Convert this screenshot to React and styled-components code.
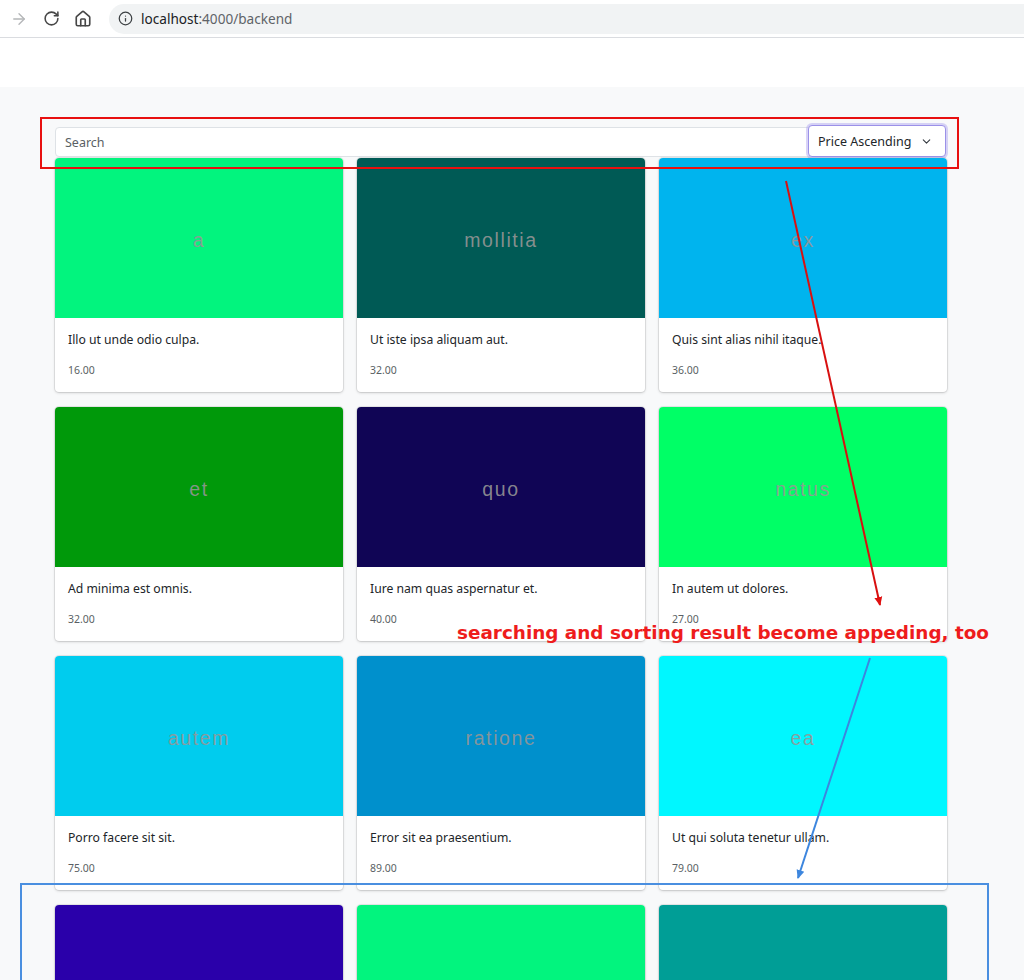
import React from "react";
import styled, { createGlobalStyle } from "styled-components";
import { ArrowRight, RotateCw, House, Info, ChevronDown } from "lucide-react";

const GlobalStyle = createGlobalStyle`
  body {
    margin: 0;
    font-family: "Noto Sans", "Open Sans", sans-serif;
    background: #fff;
    color: #212529;
  }
`;

const Page = styled.div`
  position: relative;
  width: 1024px;
  height: 980px;
  overflow: hidden;
`;

const BrowserBar = styled.header`
  height: 37px;
  display: flex;
  align-items: center;
  border-bottom: 1px solid #dadce0;
  background: #fff;
`;

const NavButton = styled.span`
  width: 32px;
  display: flex;
  justify-content: center;
  color: ${p => (p.$disabled ? "#b4b6b8" : "#474747")};
  margin-left: ${p => (p.$first ? "3px" : "0")};
`;

const UrlField = styled.div`
  flex: 1;
  height: 30px;
  margin-left: 10px;
  border-radius: 15px 0 0 15px;
  background: #f1f3f4;
  display: flex;
  align-items: center;
  padding-left: 9px;
  gap: 8px;
  font-size: 13.6px;
  color: #202124;

  span.rest {
    color: #5f6368;
  }
`;

const Spacer = styled.div`
  height: 49px;
  background: #fff;
`;

const Main = styled.main`
  background: #f8f9fa;
  padding: 40px 0 40px 55px;
  min-height: 900px;
`;

const Container = styled.div`
  width: 891px;
`;

const Toolbar = styled.div`
  height: 30px;
  display: flex;
  align-items: center;
  background: #fff;
  border: 1px solid #dee2e6;
  border-radius: 4px;
  box-sizing: border-box;
`;

const SearchText = styled.div`
  flex: 1;
  padding-left: 9px;
  font-size: 12.5px;
  color: #5a5f64;
`;

const SortSelect = styled.div`
  width: 138px;
  height: 32px;
  box-sizing: border-box;
  align-self: flex-start;
  margin: -3px -1px 0 0;
  display: flex;
  align-items: center;
  justify-content: space-between;
  padding: 0 12px 0 9px;
  background: #fff;
  border: 1px solid #9b91e8;
  border-radius: 4px;
  box-shadow: 0 0 0 2px rgba(170, 160, 240, 0.45);
  font-size: 12.5px;
  color: #212529;
`;

const Grid = styled.div`
  display: grid;
  grid-template-columns: repeat(3, 288px);
  column-gap: 14px;
  row-gap: 15px;
  margin-top: 1px;
`;

const Card = styled.article`
  height: 234px;
  background: #fff;
  border-radius: 4px;
  box-shadow: 0 0 0 1px rgba(0, 0, 0, 0.07), 0 1px 3px rgba(0, 0, 0, 0.16);
  overflow: hidden;
`;

const Thumb = styled.div`
  height: 160px;
  box-sizing: border-box;
  padding-top: 4px;
  background: ${p => p.$bg};
  display: flex;
  align-items: center;
  justify-content: center;
  font-family: "Liberation Sans", Arial, sans-serif;
  font-size: 19.5px;
  letter-spacing: 1.6px;
  color: rgba(150, 150, 150, 0.9);
`;

const CardBody = styled.div`
  padding: 13px 13px 0;
`;

const Title = styled.div`
  font-size: 12.2px;
  line-height: 18px;
  color: #212529;
`;

const Price = styled.div`
  margin-top: 14px;
  font-size: 10.5px;
  color: #5a5f64;
`;

const Overlay = styled.svg`
  position: absolute;
  left: 0;
  top: 0;
  pointer-events: none;
`;

const Note = styled.div`
  position: absolute;
  left: 457px;
  top: 622px;
  font-family: "DejaVu Sans", sans-serif;
  font-weight: bold;
  font-size: 18.4px;
  color: #ee1c1c;
  white-space: nowrap;
`;

const PRODUCTS = [
  { id: 1, word: "a", bg: "#02f47e", name: "Illo ut unde odio culpa.", price: "16.00" },
  { id: 2, word: "mollitia", bg: "#005a55", name: "Ut iste ipsa aliquam aut.", price: "32.00" },
  { id: 3, word: "ex", bg: "#00b4ee", name: "Quis sint alias nihil itaque.", price: "36.00" },
  { id: 4, word: "et", bg: "#00990a", name: "Ad minima est omnis.", price: "32.00" },
  { id: 5, word: "quo", bg: "#100555", name: "Iure nam quas aspernatur et.", price: "40.00" },
  { id: 6, word: "natus", bg: "#00ff66", name: "In autem ut dolores.", price: "27.00" },
  { id: 7, word: "autem", bg: "#00ccee", name: "Porro facere sit sit.", price: "75.00" },
  { id: 8, word: "ratione", bg: "#0090cc", name: "Error sit ea praesentium.", price: "89.00" },
  { id: 9, word: "ea", bg: "#00f7ff", name: "Ut qui soluta tenetur ullam.", price: "79.00" },
  { id: 10, word: "", bg: "#2a00aa", name: "", price: "" },
  { id: 11, word: "", bg: "#02f47e", name: "", price: "" },
  { id: 12, word: "", bg: "#009e96", name: "", price: "" },
];

const App = () => {
  return (
    <Page>
      <GlobalStyle />
      <BrowserBar>
        <NavButton $disabled $first><ArrowRight size={18} strokeWidth={1.8} /></NavButton>
        <NavButton><RotateCw size={17} strokeWidth={2.2} /></NavButton>
        <NavButton><House size={18} strokeWidth={2.2} /></NavButton>
        <UrlField>
          <Info size={15} strokeWidth={2} color="#3c4043" />
          <span>localhost<span className="rest">:4000/backend</span></span>
        </UrlField>
      </BrowserBar>
      <Spacer />
      <Main>
        <Container>
          <Toolbar>
            <SearchText>Search</SearchText>
            <SortSelect>
              Price Ascending
              <ChevronDown size={13} strokeWidth={2} color="#343a40" />
            </SortSelect>
          </Toolbar>
          <Grid>
            {PRODUCTS.map(p => (
              <Card key={p.id}>
                <Thumb $bg={p.bg}>{p.word}</Thumb>
                <CardBody>
                  <Title>{p.name}</Title>
                  <Price>{p.price}</Price>
                </CardBody>
              </Card>
            ))}
          </Grid>
        </Container>
      </Main>

      <Overlay width="1024" height="980" viewBox="0 0 1024 980">
        <defs>
          <marker id="redHead" markerWidth="10" markerHeight="10" refX="8" refY="5" orient="auto" markerUnits="userSpaceOnUse">
            <path d="M0,1 L9,5 L0,9 Z" fill="#e01010" />
          </marker>
          <marker id="blueHead" markerWidth="10" markerHeight="10" refX="8" refY="5" orient="auto" markerUnits="userSpaceOnUse">
            <path d="M0,1 L9,5 L0,9 Z" fill="#3d86de" />
          </marker>
        </defs>
        <rect x="41" y="118" width="917" height="50" fill="none" stroke="#e81010" strokeWidth="2" />
        <line x1="786" y1="181" x2="880" y2="605" stroke="#d81010" strokeWidth="2" markerEnd="url(#redHead)" />
        <line x1="870" y1="658" x2="798" y2="878" stroke="#3d86de" strokeWidth="2" markerEnd="url(#blueHead)" />
        <rect x="21" y="884" width="967" height="120" fill="none" stroke="#4a8fe0" strokeWidth="2" />
      </Overlay>
      <Note>searching and sorting result become appeding, too</Note>
    </Page>
  );
};

export default App;
